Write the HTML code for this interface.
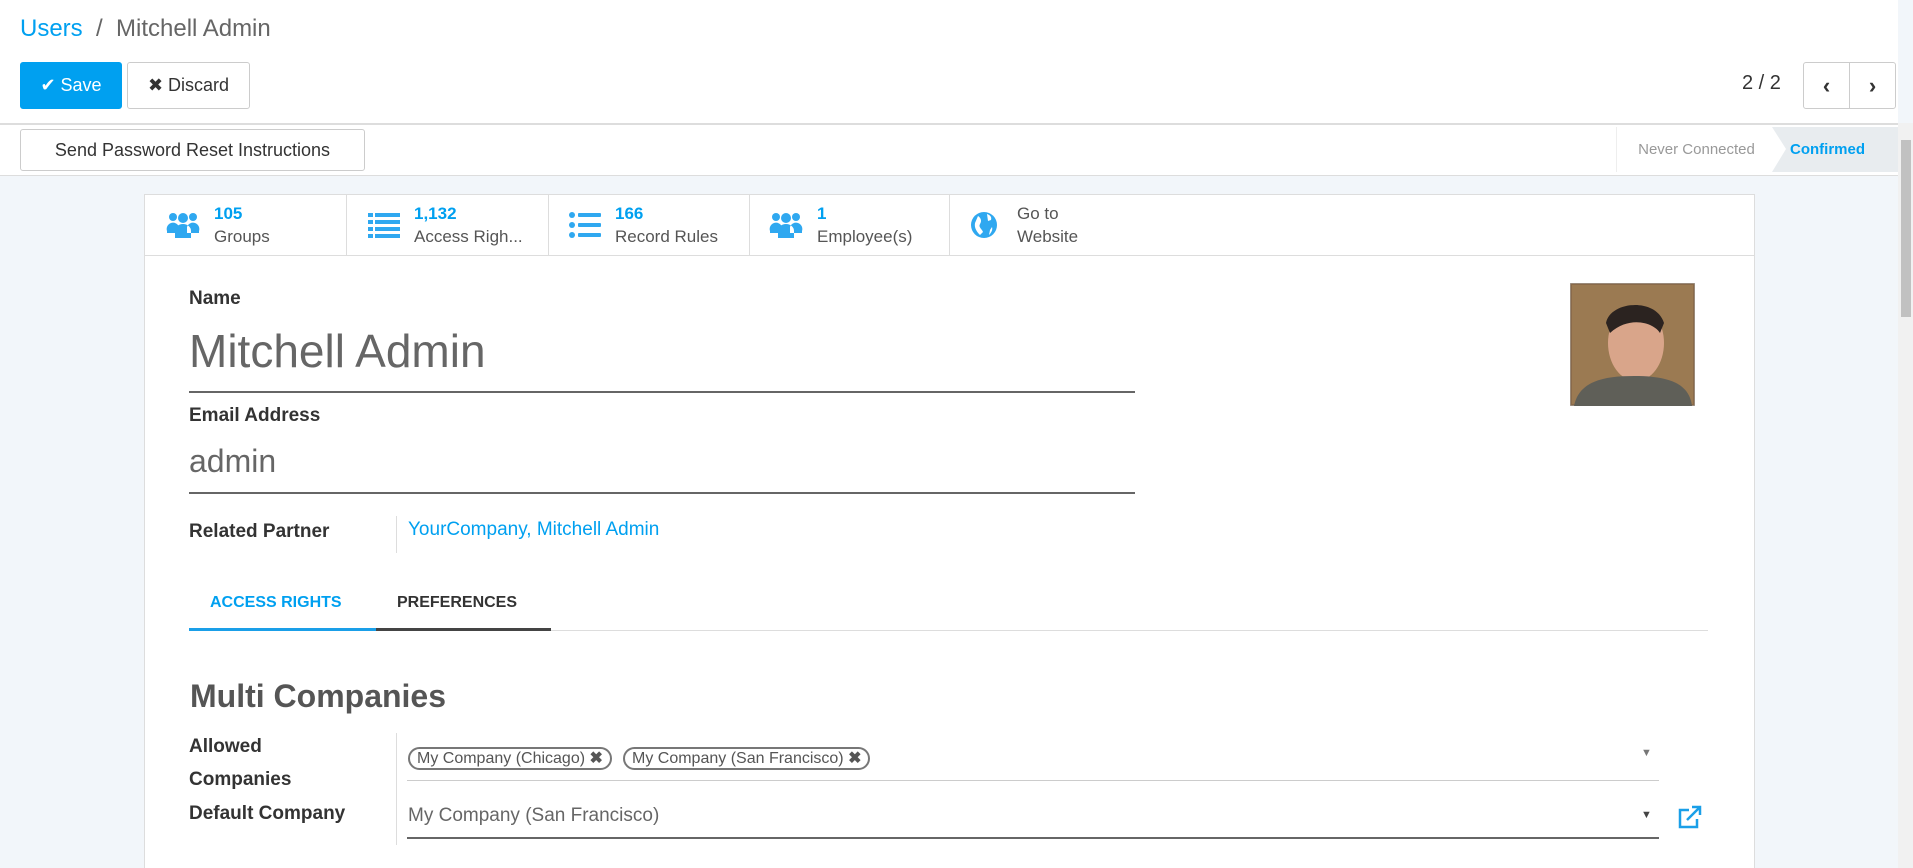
<!DOCTYPE html>
<html style="overflow:hidden;height:868px"><head><meta charset="utf-8"><style>
*{box-sizing:border-box;margin:0;padding:0}
body{width:1913px;height:868px;overflow:hidden;background:#f2f6fa;font-family:"Liberation Sans",sans-serif;color:#4c4c4c;font-size:17px;position:relative}
.abs{position:absolute}
.top{left:0;top:0;width:1898px;height:176px;background:#fff}
.blue{color:#00a0f0}
.btn{position:absolute;border:1px solid #ccc;border-radius:3px;background:#fff;display:flex;align-items:center;justify-content:center;font-size:18px;color:#333}
.lbl{position:absolute;font-weight:bold;color:#333;font-size:19px}
.sbtn{position:absolute;top:194px;height:61px;width:201px;border-right:1px solid #ddd;display:flex;align-items:center;padding-left:20px}
.sbtn .t{margin-left:14px;line-height:23px;font-size:17px;color:#555}
.sbtn .n{color:#00a0f0;font-weight:bold}
.tag{position:absolute;top:747px;height:23px;border:2px solid #777;border-radius:12px;font-size:16px;color:#555;padding:0 7px;line-height:19px;white-space:nowrap}
</style></head><body>
<div class="abs top"></div>
<div class="abs" style="left:20px;top:15px;font-size:24px"><span class="blue">Users</span> <span style="color:#666">&nbsp;/&nbsp; Mitchell Admin</span></div>
<div class="btn" style="left:20px;top:62px;width:102px;height:47px;background:#00a0f0;border-color:#00a0f0;color:#fff">✔&nbsp;Save</div>
<div class="btn" style="left:127px;top:62px;width:123px;height:47px">✖&nbsp;Discard</div>
<div class="abs" style="left:1742px;top:72px;font-size:20px;color:#333">2 / 2</div>
<div class="btn" style="left:1803px;top:62px;width:47px;height:47px;border-radius:3px 0 0 3px;font-weight:bold;font-size:22px">‹</div>
<div class="btn" style="left:1849px;top:62px;width:47px;height:47px;border-radius:0 3px 3px 0;font-weight:bold;font-size:22px">›</div>
<div class="abs" style="left:0;top:123px;width:1898px;height:2px;background:#ddd"></div>
<div class="abs" style="left:0;top:175px;width:1898px;height:1px;background:#ddd"></div>
<div class="btn" style="left:20px;top:129px;width:345px;height:42px;font-size:18px">Send Password Reset Instructions</div>
<div class="abs" style="left:1616px;top:127px;width:160px;height:45px;border-left:1px solid #eee;font-size:15px;color:#999;display:flex;align-items:center;justify-content:center">Never Connected</div>
<svg class="abs" style="left:1772px;top:127px" width="126" height="45"><polygon points="0,0 126,0 126,45 0,45 14,22" fill="#e8ecef"/></svg>
<div class="abs" style="left:1790px;top:141px;font-size:15px;font-weight:bold;color:#00a0f0">Confirmed</div>
<div class="abs" style="left:1898px;top:123px;width:15px;height:745px;background:#f1f1f1"></div>
<div class="abs" style="left:1901px;top:140px;width:10px;height:177px;background:#c1c1c1"></div>

<div class="abs" style="left:144px;top:194px;width:1611px;height:674px;background:#fff;border:1px solid #ddd;border-bottom:none"></div>
<div class="abs" style="left:145px;top:255px;width:1609px;height:1px;background:#ddd"></div>
<div class="sbtn" style="left:146px"><svg width="34" height="28" viewBox="0 0 34 28" fill="#2fa8f0"><circle cx="7" cy="6" r="4"/><circle cx="27" cy="6" r="4"/><circle cx="17" cy="7" r="5"/><path d="M1 20a6 6 0 0112-4v6H1zM33 20a6 6 0 00-12-4v6h12zM9 27v-7a8 7 0 0116 0v7z"/></svg><div class="t"><div class="n">105</div>Groups</div></div>
<div class="sbtn" style="left:348px"><svg width="32" height="26" viewBox="0 0 32 26" fill="#2fa8f0"><rect x="0" y="1" width="5" height="4"/><rect x="7" y="1" width="25" height="4"/><rect x="0" y="8" width="5" height="4"/><rect x="7" y="8" width="25" height="4"/><rect x="0" y="15" width="5" height="4"/><rect x="7" y="15" width="25" height="4"/><rect x="0" y="22" width="5" height="4"/><rect x="7" y="22" width="25" height="4"/></svg><div class="t"><div class="n">1,132</div>Access Righ...</div></div>
<div class="sbtn" style="left:549px"><svg width="32" height="26" viewBox="0 0 32 26" fill="#2fa8f0"><circle cx="3" cy="3" r="3"/><rect x="9" y="1" width="23" height="4" rx="1"/><circle cx="3" cy="13" r="3"/><rect x="9" y="11" width="23" height="4" rx="1"/><circle cx="3" cy="23" r="3"/><rect x="9" y="21" width="23" height="4" rx="1"/></svg><div class="t"><div class="n">166</div>Record Rules</div></div>
<div class="sbtn" style="left:749px"><svg width="34" height="28" viewBox="0 0 34 28" fill="#2fa8f0"><circle cx="7" cy="6" r="4"/><circle cx="27" cy="6" r="4"/><circle cx="17" cy="7" r="5"/><path d="M1 20a6 6 0 0112-4v6H1zM33 20a6 6 0 00-12-4v6h12zM9 27v-7a8 7 0 0116 0v7z"/></svg><div class="t"><div class="n">1</div>Employee(s)</div></div>
<div class="sbtn" style="left:949px;border-right:none"><svg width="30" height="28" viewBox="0 0 28 28"><circle cx="14" cy="14" r="13" fill="#2fa8f0"/><path d="M8 5c3 2 4 5 2 8s2 5 3 8l-3 3c-3-3-6-7-5-12z M17 3c3 1 5 3 4 6l-3 1z M22 16c1 3-1 6-3 8l1-5z" fill="#fff"/></svg><div class="t" style="margin-left:18px">Go to<br>Website</div></div>

<div class="lbl" style="left:189px;top:288px">Name</div>
<div class="abs" style="left:189px;top:324px;font-size:46px;color:#666">Mitchell Admin</div>
<div class="abs" style="left:189px;top:391px;width:946px;height:2px;background:#666"></div>
<div class="lbl" style="left:189px;top:405px">Email Address</div>
<div class="abs" style="left:189px;top:443px;font-size:32px;color:#666">admin</div>
<div class="abs" style="left:189px;top:492px;width:946px;height:2px;background:#666"></div>
<div class="lbl" style="left:189px;top:521px">Related Partner</div>
<div class="abs" style="left:396px;top:516px;width:1px;height:37px;background:#ddd"></div>
<div class="abs blue" style="left:408px;top:519px;font-size:19px">YourCompany, Mitchell Admin</div>
<svg class="abs" style="left:1570px;top:283px" width="125" height="123"><rect width="125" height="123" fill="#8a6a4a" stroke="#aaa"/><rect x="2" y="2" width="121" height="119" fill="#9b7a52"/><ellipse cx="66" cy="60" rx="28" ry="38" fill="#d9a58a"/><path d="M36 40c4-22 50-26 58 0l-4 10c-6-10-30-18-50 0z" fill="#2b2320"/><path d="M4 123c5-25 30-30 60-30s55 5 58 30z" fill="#5f5f58"/></svg>

<div class="abs" style="left:210px;top:594px;font-size:16px;font-weight:bold;color:#00a0f0">ACCESS RIGHTS</div>
<div class="abs" style="left:397px;top:594px;font-size:16px;font-weight:bold;color:#333">PREFERENCES</div>
<div class="abs" style="left:189px;top:630px;width:1519px;height:1px;background:#ddd"></div>
<div class="abs" style="left:189px;top:628px;width:187px;height:3px;background:#1a9fe8"></div>
<div class="abs" style="left:376px;top:628px;width:175px;height:3px;background:#444"></div>

<div class="abs" style="left:190px;top:678px;font-size:32px;font-weight:bold;color:#555">Multi Companies</div>
<div class="lbl" style="left:189px;top:736px">Allowed</div>
<div class="lbl" style="left:189px;top:769px">Companies</div>
<div class="lbl" style="left:189px;top:803px">Default Company</div>
<div class="abs" style="left:396px;top:733px;width:1px;height:112px;background:#ddd"></div>
<div class="tag" style="left:408px">My Company (Chicago) <b>✖</b></div>
<div class="tag" style="left:623px">My Company (San Francisco) <b>✖</b></div>
<div class="abs" style="left:407px;top:780px;width:1252px;height:1px;background:#ccc"></div>
<div class="abs" style="left:1641px;top:747px;font-size:11px;color:#777">▼</div>
<div class="abs" style="left:408px;top:805px;font-size:19px;color:#666">My Company (San Francisco)</div>
<div class="abs" style="left:1641px;top:809px;font-size:11px;color:#444">▼</div>
<div class="abs" style="left:407px;top:837px;width:1252px;height:2px;background:#666"></div>
<svg class="abs" style="left:1677px;top:805px" width="26" height="24" viewBox="0 0 26 24" fill="none" stroke="#1a9fe8" stroke-width="2.5"><path d="M12 5H3v17h17v-8"/><path d="M10 15L22 3M15 2h8v8"/></svg>
</body></html>
